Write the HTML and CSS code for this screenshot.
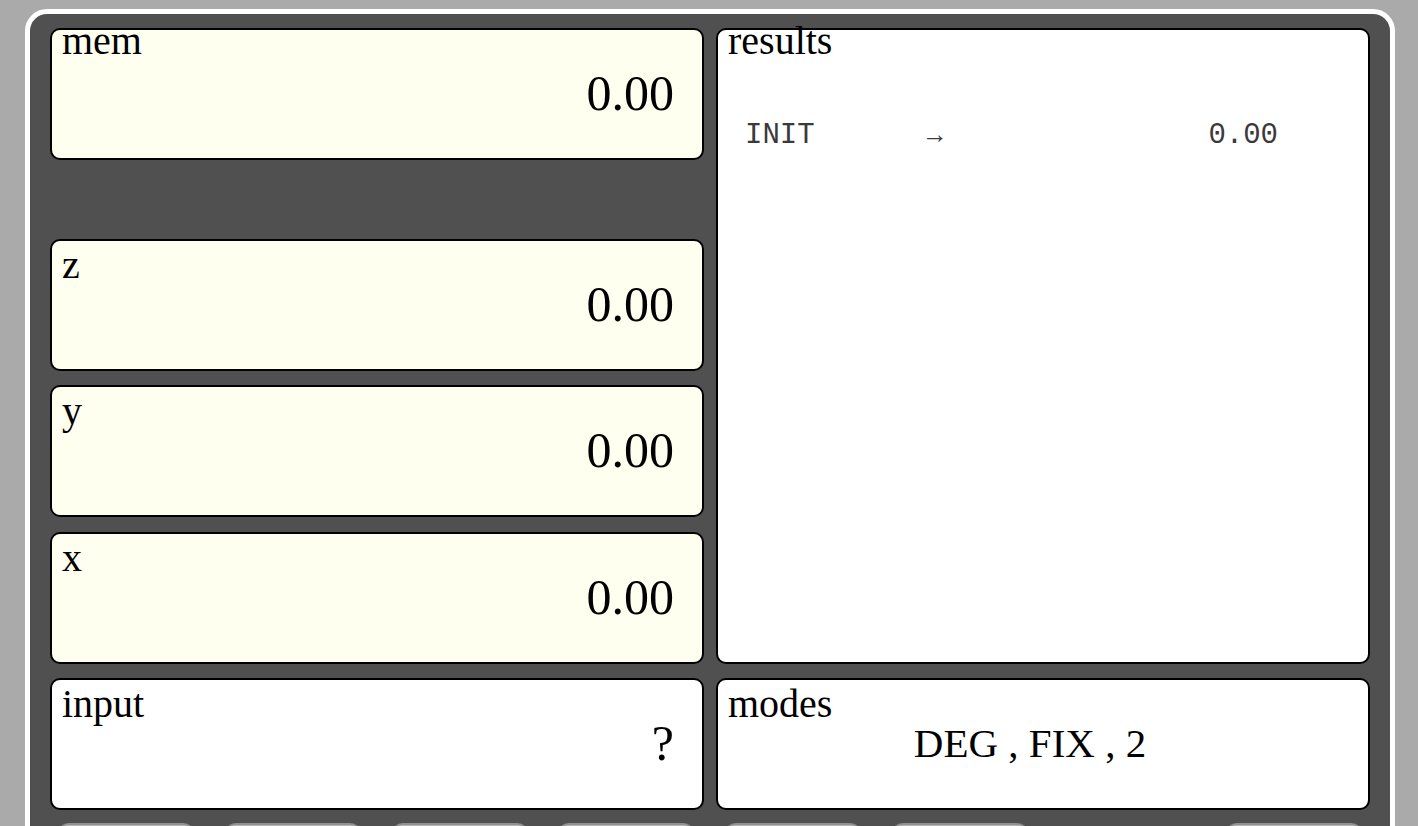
FILE: index.html
```html
<!DOCTYPE html>
<html>
<head>
<meta charset="utf-8">
<link rel="stylesheet" href="styles.css">
</head>
<body>
<div class="calc">
  <div class="display">
    <div class="panel reg mem"><div class="label">mem</div><div class="value">0.00</div></div>
    <div class="panel reg z"><div class="label low">z</div><div class="value">0.00</div></div>
    <div class="panel reg y"><div class="label low">y</div><div class="value">0.00</div></div>
    <div class="panel reg x"><div class="label low">x</div><div class="value">0.00</div></div>
    <div class="panel results"><div class="label">results</div>
      <div class="res-row"><span class="op">INIT</span><span class="arrow">→</span><span class="res">0.00</span></div>
    </div>
    <div class="panel input"><div class="label low">input</div><div class="value">?</div></div>
    <div class="panel modes"><div class="label low">modes</div><div class="value center">DEG , FIX , 2</div></div>
  </div>
  <div class="keys">
    <div class="key"></div><div class="key"></div><div class="key"></div><div class="key"></div>
    <div class="key"></div><div class="key"></div><div class="key hidden"></div><div class="key"></div>
  </div>
</div>
</body>
</html>
```
FILE: styles.css
```css
html, body { margin: 0; padding: 0; }
body {
  background: #aaaaaa;
  font-family: "Liberation Serif", "Times New Roman", serif;
  color: #000;
  height: 826px;
  overflow: hidden;
}
.calc {
  width: 1320px;
  margin: 9px 0 0 25px;
  padding: 14px 20px 20px 20px;
  background: #505050;
  border: 5px solid #ffffff;
  border-radius: 22px;
}
.display {
  display: grid;
  grid-template-columns: 654px 654px;
  grid-template-rows: 132px 50.4px 132px 132px 132px 132px;
  column-gap: 12px;
  row-gap: 14.3px;
}
.panel {
  box-sizing: border-box;
  border: 2px solid #000;
  border-radius: 10px;
  background: #ffffff;
  padding: 0 28px 0 10px;
}
.reg { background: #fffff0; }
.mem { grid-column: 1; grid-row: 1; }
.z { grid-column: 1; grid-row: 3; }
.y { grid-column: 1; grid-row: 4; }
.x { grid-column: 1; grid-row: 5; }
.results { grid-column: 2; grid-row: 1 / 6; }
.input { grid-column: 1; grid-row: 6; }
.modes { grid-column: 2; grid-row: 6; }
.label {
  font-size: 40px;
  line-height: 44px;
  height: 44px;
  margin-top: -11px;
}
.label.low { margin-top: 2px; }
.value {
  font-size: 50px;
  line-height: 60px;
  margin-top: 0;
  text-align: right;
}
.label.low + .value { margin-top: -13px; }
.value.center {
  text-align: center;
  font-size: 41px;
  padding-right: 8px;
}
.res-row {
  margin: 56px 0 0 17px;
  display: grid;
  grid-template-columns: 182px 1fr auto;
  font-family: "Liberation Mono", "Courier New", monospace;
  font-size: 29px;
  line-height: 34px;
  color: #3a3a3a;
  padding-right: 62px;
}
.arrow { font-size: 26px; }
.keys {
  display: grid;
  grid-template-columns: repeat(8, 138px);
  column-gap: 28.8px;
  padding-left: 7px;
  margin-top: 13px;
}
.key {
  height: 60px;
  background: #b8b8b8;
  border: 2px solid #909090;
  border-radius: 12px;
}
.key.hidden { visibility: hidden; }
```
